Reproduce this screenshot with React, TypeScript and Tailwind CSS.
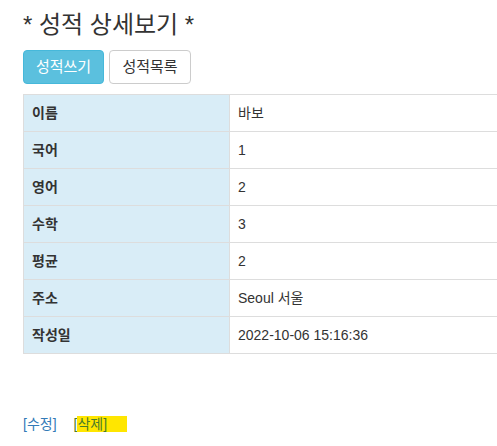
const rows = [
  { label: "이름", value: "바보" },
  { label: "국어", value: "1" },
  { label: "영어", value: "2" },
  { label: "수학", value: "3" },
  { label: "평균", value: "2" },
  { label: "주소", value: "Seoul 서울" },
  { label: "작성일", value: "2022-10-06 15:16:36" },
];

const App = () => {
  return (
    <div className="h-screen w-screen overflow-hidden bg-white text-[14px] leading-[20px] text-[#333] font-['Liberation_Sans','Noto_Sans_CJK_KR',sans-serif]">
      <div className="pl-[23px]">
        {/* Title */}
        <h3 className="mt-[12px] text-[24px] leading-[26px] font-normal">* 성적 상세보기 *</h3>

        {/* Buttons */}
        <div className="mt-[12px] flex gap-[5px]">
          <button
            type="button"
            className="h-[34px] w-[81px] rounded-[4px] border border-[#46b8da] bg-[#5bc0de] text-[15px] text-white"
          >
            성적쓰기
          </button>
          <button
            type="button"
            className="h-[34px] w-[82px] rounded-[4px] border border-[#ccc] bg-white text-[15px] text-[#333]"
          >
            성적목록
          </button>
        </div>

        {/* Detail table */}
        <table className="mt-[10px] w-[700px] border-collapse border border-[#ddd]">
          <tbody>
            {rows.map((row) => (
              <tr key={row.label}>
                <th className="w-[206px] border border-[#ddd] bg-[#d9edf7] px-[8px] py-[8px] text-left font-bold">
                  {row.label}
                </th>
                <td className="border border-[#ddd] px-[8px] py-[8px]">{row.value}</td>
              </tr>
            ))}
          </tbody>
        </table>

        {/* Links */}
        <div className="mt-[60px] flex items-center">
          <a href="#" className="text-[#337ab7]">
            [수정]
          </a>
          <a href="#" className="ml-[17px] text-[#4a7d2a]">
            [<span className="bg-[#ffe600] pr-[20px]">삭제]</span>
          </a>
        </div>
      </div>
    </div>
  );
};

export default App;
